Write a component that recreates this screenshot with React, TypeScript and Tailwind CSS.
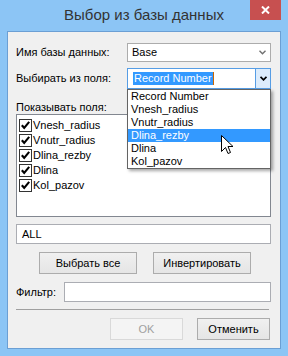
import React from "react";

const Check = () => (
  <svg width="13" height="13" viewBox="0 0 13 13" className="shrink-0">
    <rect x="0.5" y="0.5" width="12" height="12" fill="#ffffff" stroke="#333333" />
    <path d="M2.8 6.2 L5.2 8.8 L10.2 2.8" stroke="#000000" strokeWidth="2.1" fill="none" />
  </svg>
);

const fields = ["Vnesh_radius", "Vnutr_radius", "Dlina_rezby", "Dlina", "Kol_pazov"];
const listItems = ["Record Number", "Vnesh_radius", "Vnutr_radius", "Dlina_rezby", "Dlina", "Kol_pazov"];

export default function App() {
  return (
    <div className="relative flex h-[356px] w-[288px] flex-col bg-[#8cc5f5] font-['Liberation_Sans',Arial,sans-serif] text-[11px] text-black">
      <div className="flex h-[31px] items-center justify-center text-[15px] text-[#333333]">
        Выбор из базы данных
      </div>
      <div className="absolute right-[7px] top-0 flex h-[20px] w-[31px] items-center justify-center bg-[#c75050]">
        <svg width="9" height="8" viewBox="0 0 9 8">
          <path d="M1 0.5 L8 7.5 M8 0.5 L1 7.5" stroke="#ffffff" strokeWidth="2" />
        </svg>
      </div>
      <div className="mx-[7px] h-[318px] border border-[#6b9fd4] bg-[#f0f0f0]">
        <div className="ml-[8px] flex w-[255px] flex-col pt-[11px]">
          <div className="flex h-[19px] items-center">
            <div className="w-[111px]">Имя базы данных:</div>
            <div className="flex h-[19px] w-[144px] items-center justify-between border border-[#acacac] bg-white pl-[4px] pr-[4px]">
              <span>Base</span>
              <svg width="7" height="5" viewBox="0 0 7 5">
                <path d="M0.5 0.8 L3.5 3.8 L6.5 0.8" stroke="#707070" strokeWidth="1.4" fill="none" />
              </svg>
            </div>
          </div>
          <div className="mt-[6px] flex h-[21px] items-center">
            <div className="w-[111px]">Выбирать из поля:</div>
            <div className="relative flex h-[21px] w-[144px] border border-[#569de5] bg-white">
              <div className="flex flex-1 items-center pl-[5px]">
                <span className="bg-[#3399ff] px-[1px] leading-[13px] text-white">Record Number</span>
                <span className="h-[13px] w-px bg-[#cc6600]" />
              </div>
              <div className="flex w-[15px] items-center justify-center border-l border-[#569de5] bg-[#dcecfc]">
                <svg width="7" height="5" viewBox="0 0 7 5">
                  <path d="M0.5 0.8 L3.5 3.8 L6.5 0.8" stroke="#000000" strokeWidth="1.8" fill="none" />
                </svg>
              </div>
              <div className="absolute left-[-1px] top-[20px] z-10 w-[144px] border border-[#646464] bg-white py-0 shadow-[2px_2px_3px_rgba(0,0,0,0.35)]">
                {listItems.map((t) => (
                  <div
                    key={t}
                    className={
                      t === "Dlina_rezby"
                        ? "h-[13px] bg-[#3399ff] pl-[3px] leading-[13px] text-white"
                        : "h-[13px] pl-[3px] leading-[13px]"
                    }
                  >
                    {t}
                  </div>
                ))}
              </div>
            </div>
          </div>
          <div className="mt-[11px] h-[14px] leading-[14px]">Показывать поля:</div>
          <div className="h-[103px] border border-[#828790] bg-white pl-[2px] pt-[3px]">
            {fields.map((f) => (
              <div key={f} className="flex h-[15px] items-center gap-[1px]">
                <Check />
                <span>{f}</span>
              </div>
            ))}
          </div>
          <div className="mt-[7px] flex h-[20px] items-center border border-[#abadb3] bg-white pl-[5px]">ALL</div>
          <div className="mt-[8px] flex h-[22px] gap-[16px] pl-[23px]">
            <div className="flex w-[98px] items-center justify-center border border-[#acacac] bg-gradient-to-b from-[#f0f0f0] to-[#e5e5e5]">
              Выбрать все
            </div>
            <div className="flex w-[98px] items-center justify-center border border-[#acacac] bg-gradient-to-b from-[#f0f0f0] to-[#e5e5e5]">
              Инвертировать
            </div>
          </div>
          <div className="mt-[8px] flex h-[20px] items-center">
            <div className="w-[48px]">Фильтр:</div>
            <div className="h-[20px] w-[207px] border border-[#abadb3] bg-white" />
          </div>
          <div className="mt-[7px] h-px w-[253px] bg-[#a0a0a0]" />
          <div className="mt-[8px] flex h-[22px] gap-[14px] pl-[94px]">
            <div className="flex w-[73px] items-center justify-center border border-[#d9d9d9] bg-[#f4f4f4] text-[#a0a0a0]">
              OK
            </div>
            <div className="flex w-[73px] items-center justify-center border border-[#acacac] bg-gradient-to-b from-[#f0f0f0] to-[#e5e5e5]">
              Отменить
            </div>
          </div>
        </div>
      </div>
      <svg
        className="pointer-events-none absolute left-[221px] top-[135px] z-20"
        width="13"
        height="20"
        viewBox="0 0 13 20"
      >
        <path
          d="M0.5 0.5 L0.5 16.5 L4.5 12.5 L7 18.5 L9.5 17.5 L7 11.5 L12 11.5 Z"
          fill="#ffffff"
          stroke="#000000"
          strokeWidth="1"
          strokeLinejoin="miter"
        />
      </svg>
    </div>
  );
}
